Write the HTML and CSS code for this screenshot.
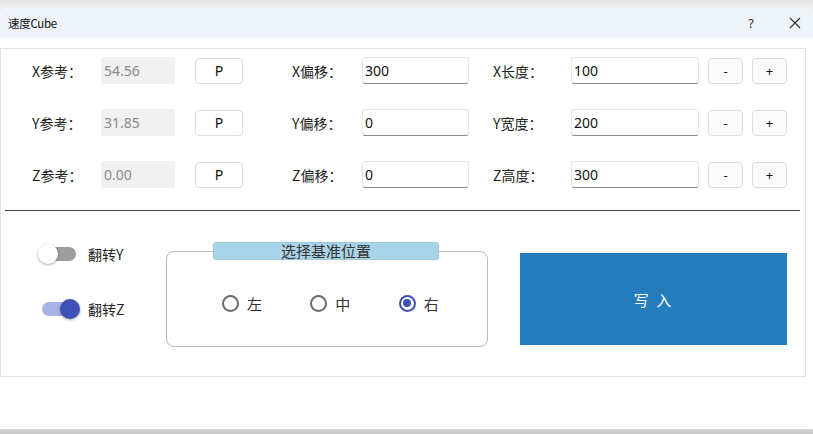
FILE: index.html
```html
<!DOCTYPE html>
<html lang="zh">
<head>
<meta charset="utf-8">
<title>速度Cube</title>
<link rel="stylesheet" href="styles.css">
</head>
<body>
<div class="window">
  <div class="titlebar">
    <span class="title">速度Cube</span>
    <span class="help">?</span>
    <span class="close"><svg width="12" height="12" viewBox="0 0 12 12"><path d="M1 1L11 11M11 1L1 11" stroke="#333" stroke-width="1.1" fill="none"/></svg></span>
  </div>
  <div class="content">
    <div class="panel">
      <div class="rows">
        <div class="row">
          <span class="lbl lbl1">X参考：</span>
          <span class="ro">54.56</span>
          <span class="btn pbtn">P</span>
          <span class="lbl lbl2">X偏移：</span>
          <span class="inp in2">300</span>
          <span class="lbl lbl3">X长度：</span>
          <span class="inp in3">100</span>
          <span class="btn sbtn">-</span>
          <span class="btn sbtn">+</span>
        </div>
        <div class="row">
          <span class="lbl lbl1">Y参考：</span>
          <span class="ro">31.85</span>
          <span class="btn pbtn">P</span>
          <span class="lbl lbl2">Y偏移：</span>
          <span class="inp in2">0</span>
          <span class="lbl lbl3">Y宽度：</span>
          <span class="inp in3">200</span>
          <span class="btn sbtn">-</span>
          <span class="btn sbtn">+</span>
        </div>
        <div class="row">
          <span class="lbl lbl1">Z参考：</span>
          <span class="ro">0.00</span>
          <span class="btn pbtn">P</span>
          <span class="lbl lbl2">Z偏移：</span>
          <span class="inp in2">0</span>
          <span class="lbl lbl3">Z高度：</span>
          <span class="inp in3">300</span>
          <span class="btn sbtn">-</span>
          <span class="btn sbtn">+</span>
        </div>
      </div>
      <div class="sep"></div>
      <div class="lower">
        <div class="toggles">
          <div class="tgl-row">
            <span class="toggle off"><span class="track"></span><span class="knob"></span></span>
            <span class="tgl-lbl">翻转Y</span>
          </div>
          <div class="tgl-row">
            <span class="toggle on"><span class="track"></span><span class="knob"></span></span>
            <span class="tgl-lbl">翻转Z</span>
          </div>
        </div>
        <div class="group">
          <div class="group-title">选择基准位置</div>
          <div class="radios">
            <span class="radio"><span class="circle"></span><span>左</span></span>
            <span class="radio"><span class="circle"></span><span>中</span></span>
            <span class="radio"><span class="circle checked"></span><span>右</span></span>
          </div>
        </div>
        <div class="write">写 入</div>
      </div>
    </div>
  </div>
</div>
</body>
</html>
```

FILE: styles.css
```css
html, body {
  margin: 0;
  padding: 0;
}
body {
  width: 813px;
  height: 434px;
  overflow: hidden;
  background: linear-gradient(#e4e4e4, #eeeeee 8px, #d6d6d6 430px, #c4c4c4);
  font-family: "Noto Sans", "Noto Sans CJK SC", sans-serif;
  color: #222;
}
.window {
  margin-top: 8px;
  height: 421px;
  background: #ffffff;
  border-radius: 8px 8px 0 0;
  display: flex;
  flex-direction: column;
  overflow: hidden;
}
.titlebar {
  height: 30px;
  flex: none;
  background: #eef3fa;
  display: flex;
  align-items: center;
  padding-left: 8px;
  font-size: 12px;
}
.title {
  font-family: "Noto Sans CJK SC", sans-serif;
  font-size: 11.5px;
  color: #111;
  letter-spacing: -0.3px;
}
.help {
  margin-left: auto;
  margin-right: 35px;
  font-size: 13px;
  color: #333;
}
.close {
  margin-right: 12px;
  display: flex;
}
.content {
  padding-top: 10px;
}
.panel {
  width: 804px;
  height: 327px;
  border: 1px solid #e4e4e4;
}
.rows {
  padding-top: 8px;
  padding-left: 31px;
  display: flex;
  flex-direction: column;
  gap: 25px;
}
.row {
  display: flex;
  align-items: center;
  height: 27px;
}
.lbl {
  font-family: "Noto Sans CJK SC", sans-serif;
  font-size: 14px;
  color: #222;
}
.lbl1 { width: 69px; }
.lbl2 { width: 70px; margin-left: 49px; }
.lbl3 { width: 78px; margin-left: 24px; }
.ro {
  width: 74px;
  height: 27px;
  box-sizing: border-box;
  background: #f1f1f1;
  color: #8a8a8a;
  font-size: 14px;
  line-height: 27px;
  padding-left: 3px;
  border-radius: 2px;
}
.inp {
  height: 27px;
  box-sizing: border-box;
  border: 1px solid #e6e6e6;
  border-bottom: 1px solid #8c8c8c;
  border-radius: 3px;
  font-size: 14px;
  line-height: 25px;
  padding-left: 2px;
  color: #111;
}
.in2 { width: 107px; }
.in3 { width: 128px; }
.btn {
  height: 26px;
  box-sizing: border-box;
  border: 1px solid #dcdcdc;
  border-radius: 4px;
  display: flex;
  align-items: center;
  justify-content: center;
  font-size: 14px;
  color: #111;
}
.pbtn {
  width: 48px;
  margin-left: 20px;
  background: #ffffff;
}
.sbtn {
  width: 35px;
  margin-left: 9px;
  background: #fbfbfb;
  font-size: 13px;
}
.sep {
  margin: 22px 0 0 4px;
  width: 795px;
  height: 1px;
  background: #444444;
}
.lower {
  display: flex;
  align-items: flex-start;
  padding-left: 37px;
}
.toggles {
  width: 128px;
  padding-top: 32px;
  display: flex;
  flex-direction: column;
  gap: 33px;
}
.tgl-row {
  display: flex;
  align-items: center;
  gap: 10px;
}
.toggle {
  position: relative;
  width: 40px;
  height: 22px;
  flex: none;
}
.track {
  position: absolute;
  left: 3px;
  right: 2px;
  top: 4px;
  height: 14px;
  border-radius: 7px;
}
.knob {
  position: absolute;
  top: 1px;
  width: 20px;
  height: 20px;
  border-radius: 50%;
  box-shadow: 0 1px 3px rgba(0, 0, 0, 0.35);
}
.toggle.off .track { background: #9e9e9e; }
.toggle.off .knob { left: 0; background: #ffffff; }
.toggle.on .track { background: #a8b2e4; left: 4px; }
.toggle.on .knob { right: -2px; background: #3f51b5; }
.tgl-lbl {
  font-family: "Noto Sans CJK SC", sans-serif;
  font-size: 14px;
  color: #222;
}
.group {
  position: relative;
  margin-top: 40px;
  width: 322px;
  height: 96px;
  box-sizing: border-box;
  border: 1px solid #bababa;
  border-radius: 8px;
}
.group-title {
  position: absolute;
  top: -10px;
  left: 46px;
  width: 226px;
  height: 18px;
  box-sizing: border-box;
  background: #a9d3e7;
  border: 1px solid #9cc6dc;
  border-radius: 3px;
  text-align: center;
  font-family: "Noto Sans CJK SC", sans-serif;
  font-size: 15px;
  line-height: 15px;
  color: #333;
}
.radios {
  margin-top: 8px;
  height: 86px;
  display: flex;
  align-items: center;
  padding-left: 55px;
}
.radio {
  width: 90px;
  display: flex;
  align-items: center;
  gap: 8px;
  font-family: "Noto Sans CJK SC", sans-serif;
  font-size: 15px;
  color: #333;
}
.circle {
  width: 17px;
  height: 17px;
  box-sizing: border-box;
  border: 2px solid #6a6a6a;
  border-radius: 50%;
  display: flex;
  align-items: center;
  justify-content: center;
}
.circle.checked {
  border-color: #3f51b5;
}
.circle.checked::after {
  content: "";
  width: 8px;
  height: 8px;
  border-radius: 50%;
  background: #3f51b5;
}
.write {
  margin: 42px 0 0 32px;
  width: 267px;
  height: 92px;
  background: #247cbd;
  color: #ffffff;
  display: flex;
  align-items: center;
  justify-content: center;
  font-family: "Noto Sans CJK SC", sans-serif;
  font-size: 15px;
  letter-spacing: 2px;
}
```
